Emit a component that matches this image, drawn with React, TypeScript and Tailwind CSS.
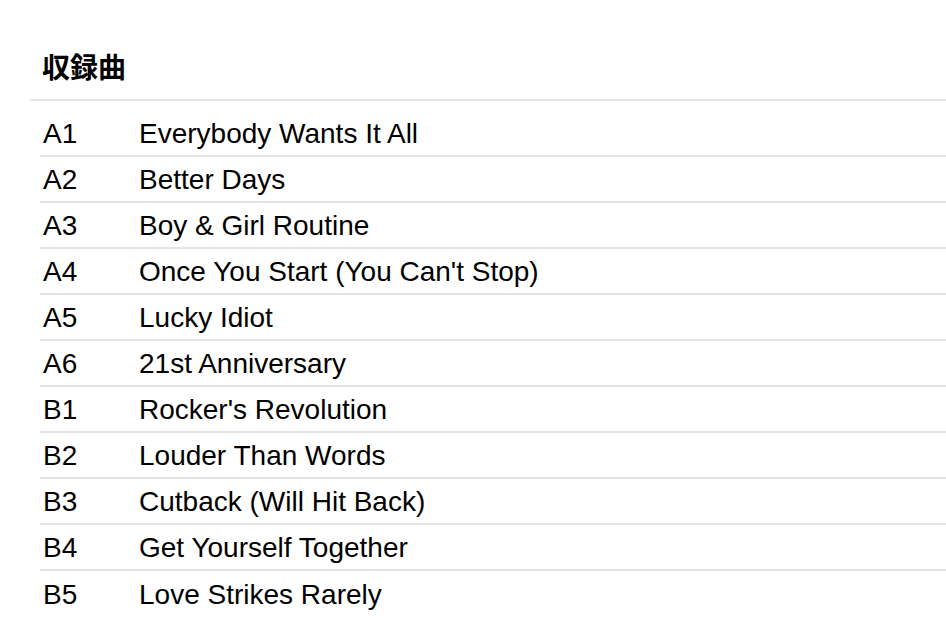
import React from 'react';

const tracks: [string, string][] = [
  ['A1', 'Everybody Wants It All'],
  ['A2', 'Better Days'],
  ['A3', 'Boy & Girl Routine'],
  ['A4', "Once You Start (You Can't Stop)"],
  ['A5', 'Lucky Idiot'],
  ['A6', '21st Anniversary'],
  ['B1', "Rocker's Revolution"],
  ['B2', 'Louder Than Words'],
  ['B3', 'Cutback (Will Hit Back)'],
  ['B4', 'Get Yourself Together'],
  ['B5', 'Love Strikes Rarely'],
];

export default function App() {
  return (
    <div
      className="min-h-[630px] bg-white pl-[30px] pt-[51px] text-black"
      style={{ fontFamily: '"Liberation Sans", "Noto Sans CJK JP", Arial, sans-serif' }}
    >
      <h2 className="border-b-2 border-[#e5e5e5] pb-[12px] pl-[12px] text-[28px] font-bold leading-[36px]">
        収録曲
      </h2>
      <div className="ml-[10px] mt-[10px]">
        {tracks.map(([pos, title], i) => (
          <div
            key={pos}
            className={`flex h-[46px] items-center pt-[2px] text-[28px] ${i < tracks.length - 1 ? 'border-b-2 border-[#e5e5e5]' : ''}`}
          >
            <span className="w-[99px] pl-[3px]">{pos}</span>
            <span>{title}</span>
          </div>
        ))}
      </div>
    </div>
  );
}
